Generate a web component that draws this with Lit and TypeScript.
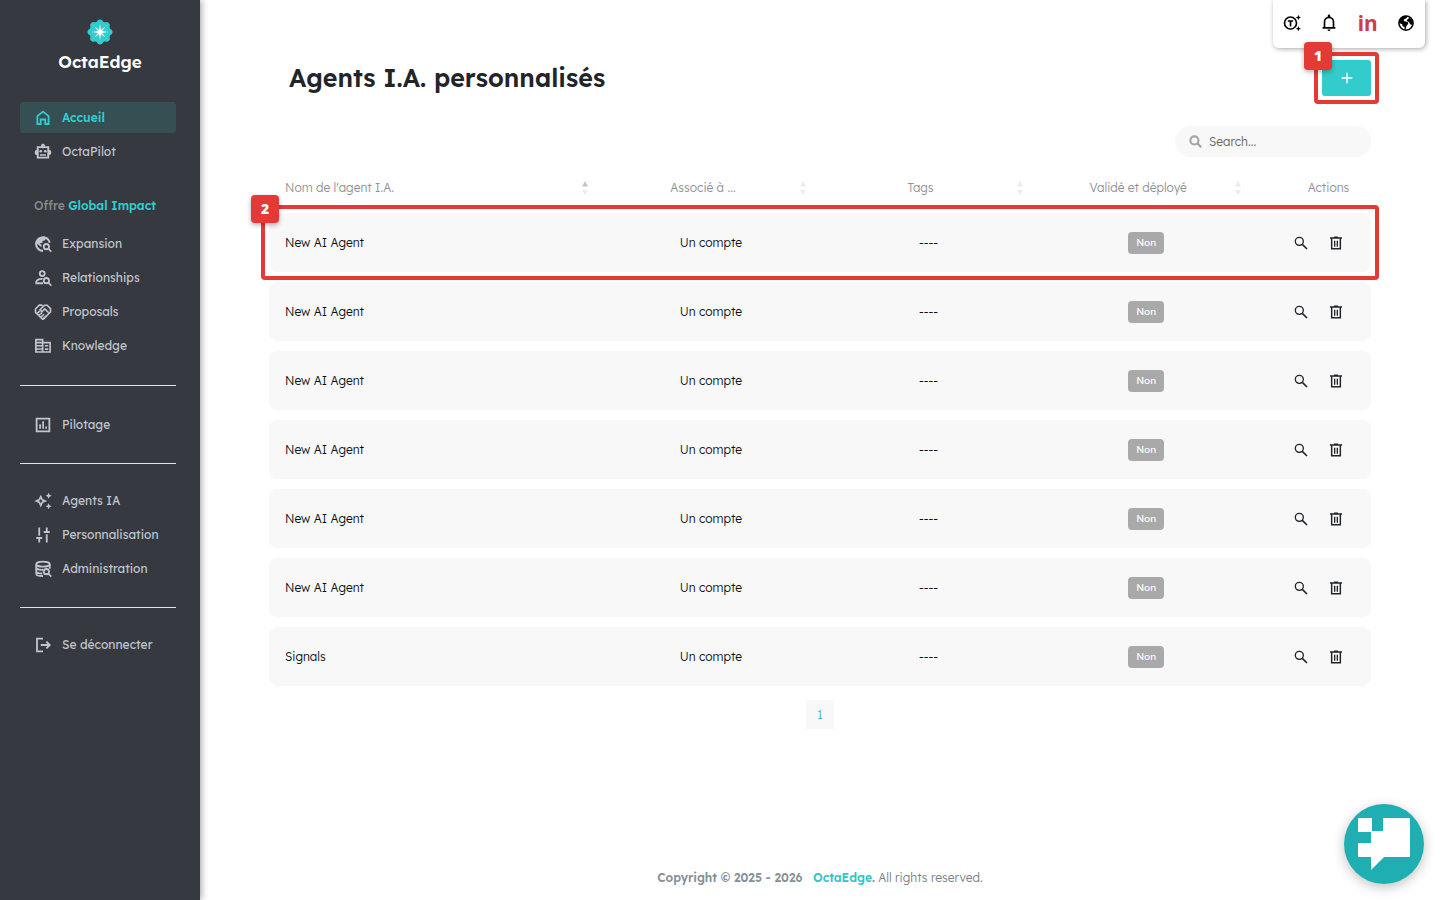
import { LitElement, html, css, svg } from "lit";
import { customElement, property } from "lit/decorators.js";

type Glyph = ReturnType<typeof svg>;

const line = (d: string, w = 2.4): Glyph =>
  svg`<path d=${d} fill="none" stroke="currentColor" stroke-width=${w} />`;
const fill = (d: string): Glyph => svg`<path d=${d} fill="currentColor" fill-rule="evenodd" />`;

const lens = svg`<circle cx="16.5" cy="15.5" r="3.5" fill="none" stroke="currentColor" stroke-width="2.4" />
  <path d="M19 18l4 4.3" stroke="currentColor" stroke-width="2.4" />`;

const ICONS: Record<string, Glyph> = {
  home: line("M4.500 20V9.500L12 3.500l7.500 6v10.500h-4.500v-6h-6v6z"),
  robot: svg`${line("M5 5.500h14v14H5z", 2.6)}${fill("M12 1a2.500 2.500 0 0 1 1.200 4.700V7h-2.400V5.700A2.500 2.500 0 0 1 12 1zM4.500 9v7a3.500 3.500 0 0 1 0-7zM19.500 9a3.500 3.500 0 0 1 0 7zM8 15h8v2H8z")}
    <circle cx="9" cy="11" r="1.800" fill="currentColor" /><circle cx="15" cy="11" r="1.800" fill="currentColor" />`,
  expansion: svg`${fill("M12 22.500C6.300 22.500 1.500 17.700 1.500 12S6.300 1.500 12 1.500c5.200 0 9.400 3.600 10.200 8.700h-2.600a8 8 0 0 0-4.100-5.300V5c0 1.500-1 2.500-2.500 2.500h-1.500v2c0 .55-.45 1-1 1H8.500v2H10v3H9l-4.800-4A8 8 0 0 0 12 19.800z")}${lens}`,
  relations: svg`<circle cx="11" cy="6" r="3.300" fill="none" stroke="currentColor" stroke-width="2.400" />
    ${line("M11.500 13.200C7 12.800 3 14.800 3 17.300V19h9")}${lens}`,
  proposals: svg`${line("M12.500 5L10 2.800H7L2 8v4.500l9.500 9h1L22 12V7.500L17.500 3H14L8 9l2.500 2.500L14.500 8l5 5", 2.2)}${line("M4.500 13.500l3.500-3M7 16l4-3.500M9.500 18.500l4-3.500M12 21l4.500-4", 2)}`,
  knowledge: svg`${line("M2.500 3.500h9v16.500h-9zM11.500 7.500h10v12.500h-10M2.500 7.500h9M2.500 11.700h9M2.500 16h9", 2.2)}${fill("M14.500 10.500h4.500v2.200h-4.500zM14.500 15h4.500v2.200h-4.500z")}`,
  pilotage: svg`${line("M3.500 3.500h17v17h-17z")}${fill("M7 11h2.300v6H7zM11 7h2.300v10H11zM15 14h2.300v3H15z")}`,
  agents: fill("M19.500 9l1.250-2.750L23.500 5l-2.750-1.250L19.500 1l-1.250 2.750L15.500 5l2.750 1.250zM19.500 15l-1.250 2.750L15.500 19l2.750 1.250L19.500 23l1.250-2.750L23.500 19l-2.750-1.250zM11.700 9.300L9 3.500 6.300 9.300.5 12l5.800 2.700L9 20.500l2.700-5.800L17.500 12zM9.990 12.990L9 15.170l-.99-2.180L5.830 12l2.180-.99L9 8.830l.99 2.180 2.180.99z"),
  tune: line("M7 2v11M7 17v5M3 16h8M17 22V11M17 7V2M13 8h8"),
  admin: svg`<ellipse cx="12" cy="5.500" rx="9" ry="3.300" fill="none" stroke="currentColor" stroke-width="2.400" />
    ${line("M3 5.500v13c0 1.700 3.500 2.800 9 2.800M3 10.500c1 2.500 5 2.800 9 2.500M3 16c1 1.500 4 2 8 2M21 5.500v6")}${lens}`,
  logout: line("M12 3.500H4v17h8M9 12h12M16.500 7.500L21 12l-4.500 4.500"),
  token: svg`<circle cx="10" cy="12" r="8" fill="none" stroke="currentColor" stroke-width="2.200" />
    ${line("M6.500 9.300h7M10 9v7.500", 2.2)}${fill("M20.500 8l1-2.500 2.500-1-2.500-1-1-2.500-1 2.500-2.500 1 2.500 1zM20.500 23l1-2.500 2.500-1-2.500-1-1-2.500-1 2.500-2.500 1 2.500 1z")}`,
  bell: svg`${line("M3.500 18.500h17M6 18.500V10.500a6 6 0 0 1 12 0v8", 2.2)}${fill("M10.300 2.500a1.700 1.700 0 0 1 3.400 0V5h-3.400zM10 20.500h4a2 2 0 0 1-4 0z")}`,
  globe: svg`<circle cx="12" cy="12" r="9.500" fill="none" stroke="currentColor" stroke-width="2" />
    ${fill("M2.500 12C2.500 6 7 2 13 2.500c1.500 2-.5 3.500-2.500 4C8.500 7 8.500 9 10 9.500c2 .5 4.500 0 5 2.500.3 2-2 2.500-2.500 4-.5 2 0 4.500-2.500 5.500v-4.500c-1.500 0-3-1-3-2.500v-1zM16.500 4.500l4.500 4v6l-3-.5c-1-1-1-2.500-2.500-3.500-1-.8-2.500-1-2.500-2.200 0-1.500 2.500-1.500 3.500-3.800z")}`,
  search: svg`<circle cx="9.500" cy="9.500" r="6" fill="none" stroke="currentColor" stroke-width="2" />${line("M14 14l7 7", 2.4)}`,
  find: svg`<circle cx="10" cy="10" r="7.500" fill="none" stroke="currentColor" stroke-width="3.800" />${line("M15 15l7.500 7.500", 4.2)}`,
  trash: svg`${line("M5.500 5v15.500h13V5M3 4.500h18M9 3.300h6", 2.2)}${line("M10 8.500v9M14 8.500v9", 2)}`,
  plus: line("M12 4v16M4 12h16", 2.2),
};

@customElement("ui-icon")
export class UiIcon extends LitElement {
  @property() name = "";
  static styles = css`
    :host { display: inline-flex; flex: none; width: 18px; height: 18px; }
    svg { width: 100%; height: 100%; }
  `;
  render() {
    return html`<svg viewBox="0 0 24 24" aria-hidden="true">${ICONS[this.name]}</svg>`;
  }
}

const markers = css`
  .frame { position: absolute; inset: -8px; z-index: 3; border: 4px solid #e53935; border-radius: 4px; pointer-events: none; }
  .step { position: absolute; top: -14px; left: -14px; width: 28px; height: 28px; border-radius: 4px; background: #e53935; color: #fff; font: 800 14px/28px "Open Sans", sans-serif; text-align: center; box-shadow: 0 2px 5px rgba(0, 0, 0, 0.3); }
`;

interface NavLink { icon: string; label: string; active?: boolean; }

@customElement("side-nav")
export class SideNav extends LitElement {
  static styles = css`
    :host { display: block; box-sizing: border-box; padding: 19px 24px 20px 20px; background: #363940; color: #c1c6ce; box-shadow: 1px 0 7px rgba(0, 0, 0, 0.4); }
    .brand { display: flex; flex-direction: column; align-items: center; gap: 5px; color: #fff; padding-left: 4px; font-size: 17px; line-height: 24px; font-weight: 600; text-decoration: none; }
    .brand svg { width: 26px; height: 26px; }
    .group { display: flex; flex-direction: column; gap: 3px; }
    .first { margin-top: 28px; }
    .main { padding-bottom: 1px; }
    .solo { padding-top: 2px; }
    .offer { margin: 29px 0 12px 14px; font-size: 12px; line-height: 20px; font-weight: 500; color: #85878b; }
    .offer b { color: #33cccc; font-weight: 600; }
    .link { display: flex; align-items: center; gap: 10px; height: 31px; padding-left: 14px; border-radius: 3px; color: inherit; font-size: 12px; font-weight: 400; text-decoration: none; }
    .active { background: #364f53; color: #33cccc; font-weight: 600; }
    .rule { height: 1px; border: 0; margin: 23px 0 21px; background: #dfe3ea; }
  `;
  private links(items: NavLink[], extra = "") {
    return html`<div class="group ${extra}">
      ${items.map((i) => html`<a class="link ${i.active ? "active" : ""}" href="#"><ui-icon name=${i.icon}></ui-icon>${i.label}</a>`)}
    </div>`;
  }
  render() {
    const petals = [0, 45, 90, 135, 180, 225, 270, 315];
    return html`
      <a class="brand" href="#">
        <svg viewBox="-13 -13 26 26" aria-hidden="true">
          <circle r="10.700" fill="#33cccc" />
          ${petals.map((a) => svg`<circle cx="9.500" r="3" fill="#33cccc" transform="rotate(${a})" />`)}
          ${petals.map((a) => svg`<path d="M0-1.200L8 0 0 1.200z" fill="#fff" transform="rotate(${a})" />`)}
          <circle r="2.400" fill="#fff" />
        </svg>
        OctaEdge
      </a>
      <nav>
        ${this.links([{ icon: "home", label: "Accueil", active: true }, { icon: "robot", label: "OctaPilot" }], "first")}
        <div class="offer">Offre <b>Global Impact</b></div>
        ${this.links([
          { icon: "expansion", label: "Expansion" },
          { icon: "relations", label: "Relationships" },
          { icon: "proposals", label: "Proposals" },
          { icon: "knowledge", label: "Knowledge" },
        ], "main")}
        <hr class="rule" />
        ${this.links([{ icon: "pilotage", label: "Pilotage" }], "solo")}
        <hr class="rule" />
        ${this.links([
          { icon: "agents", label: "Agents IA" },
          { icon: "tune", label: "Personnalisation" },
          { icon: "admin", label: "Administration" },
        ])}
        <hr class="rule" />
        ${this.links([{ icon: "logout", label: "Se déconnecter" }])}
      </nav>
    `;
  }
}

@customElement("agents-table")
export class AgentsTable extends LitElement {
  static styles = [markers, css`
    :host { display: block; }
    table { width: 100%; border-collapse: separate; border-spacing: 0 10px; table-layout: fixed; font-size: 12px; line-height: 18px; font-weight: 300; color: #0c0f12; }
    .c-name { width: 30.500%; }
    .c-mid { width: 19.750%; }
    th { height: 27px; padding: 0; vertical-align: top; font-weight: 300; color: #8f9194; }
    .head { display: flex; align-items: center; height: 24px; padding: 0 16px; }
    .head span { flex: 1; padding-right: 14px; }
    .start { text-align: left; }
    .last { padding: 0 0 0 28px; justify-content: center; }
    .sort { display: flex; flex: none; width: 8px; height: 16px; padding: 0; border: 0; background: none; color: #ebecee; }
    .sort svg { width: 8px; height: 16px; }
    .asc .up { fill: #c3c4c7; }
    td { height: 59px; padding: 0 22px 0 16px; box-sizing: border-box; background: #f8f8f8; text-align: center; }
    td:first-child { text-align: left; border-radius: 8px 0 0 8px; }
    td:last-child { padding: 0 8px 0 16px; border-radius: 0 8px 8px 0; }
    .badge { display: inline-block; padding: 2px 8px; border-radius: 4px; background: #a9a9a9; color: #fff; font-size: 10px; font-weight: 400; }
    .actions { display: flex; align-items: center; justify-content: center; gap: 19px; }
    .act { display: flex; padding: 0; border: 0; background: none; color: #212529; }
    .act ui-icon { width: 16px; height: 16px; }
    .marked { position: relative; }
  `];
  private head(label: string, asc = false, start = false) {
    return html`<th scope="col"><div class="head ${start ? "start" : ""}"><span>${label}</span>
      <button class="sort ${asc ? "asc" : ""}" aria-label="Trier"><svg viewBox="0 0 8 16" fill="currentColor"><path class="up" d="M4 1l3 5.500H1z" /><path d="M4 15l3-5H1z" /></svg></button></div></th>`;
  }
  render() {
    const names = [...Array(6).fill("New AI Agent"), "Signals"];
    return html`<table>
      <colgroup><col class="c-name" /><col class="c-mid" /><col class="c-mid" /><col class="c-mid" /><col /></colgroup>
      <thead><tr>
        ${this.head("Nom de l'agent I.A.", true, true)}${this.head("Associé à ...")}${this.head("Tags")}${this.head("Validé et déployé")}
        <th scope="col"><div class="head last">Actions</div></th>
      </tr></thead>
      <tbody>
        ${names.map((n, i) => html`<tr class=${i === 0 ? "marked" : ""}>
          <td>${n}</td><td>Un compte</td><td>----</td>
          <td><span class="badge">Non</span></td>
          <td><div class="actions">
            <button class="act" aria-label="Voir"><ui-icon name="search"></ui-icon></button>
            <button class="act" aria-label="Supprimer"><ui-icon name="trash"></ui-icon></button>
          </div>${i === 0 ? html`<div class="frame"><span class="step">2</span></div>` : ""}</td>
        </tr>`)}
      </tbody>
    </table>`;
  }
}

@customElement("app-root")
export class AppRoot extends LitElement {
  static styles = [markers, css`
    :host { display: grid; grid-template-columns: 200px minmax(0, 1fr); min-height: 100vh; background: #fff; font-family: Lexend, Inter, sans-serif; color: #212529; }
    main { display: flex; flex-direction: column; padding: 52px 69px 0; }
    .top { display: flex; align-items: center; justify-content: space-between; height: 52px; padding-left: 20px; }
    h1 { margin: 0; font-size: 25px; line-height: 36px; font-weight: 600; }
    .add-wrap { position: relative; display: flex; }
    .add { display: flex; align-items: center; justify-content: center; width: 49px; height: 36px; padding: 0; border: 0; border-radius: 3px; background: #33cccc; color: #fff; }
    .add ui-icon { width: 16px; height: 16px; }
    .search { display: flex; align-items: center; align-self: flex-end; gap: 7px; box-sizing: border-box; width: 196px; height: 31px; margin: 22px 0 9px; padding: 0 14px; border-radius: 16px; background: #f8f8f8; color: #a5a5a5; }
    .search ui-icon { width: 13px; height: 13px; }
    .search input { flex: 1; min-width: 0; padding: 0; border: 0; outline: 0; background: none; font: 300 12px/18px Lexend, Inter, sans-serif; color: #212529; }
    .search input::placeholder { color: #666; opacity: 1; }
    .page { align-self: center; width: 28px; height: 29px; margin-top: 4px; border: 0; padding: 0; background: #f8f8f8; color: #33bfc0; font: 300 12px/18px Lexend, Inter, sans-serif; }
    footer { margin-top: auto; padding-bottom: 12px; text-align: center; font-size: 12px; line-height: 20px; font-weight: 300; color: #788189; }
    footer b { font-weight: 600; color: #869099; }
    footer a { margin-left: 7px; color: #33c4c6; text-decoration: none; }
    .tools { position: absolute; z-index: 2; top: 0; right: 15px; display: flex; align-items: center; justify-content: space-between; box-sizing: border-box; width: 152px; height: 48px; padding: 0 10px 2px; border-radius: 0 0 6px 6px; background: #fff; box-shadow: 1px 1px 5px rgba(0, 0, 0, 0.35); }
    .tool { display: flex; padding: 0; border: 0; background: none; color: #000; }
    .lang { font: 700 21px/24px "Noto Sans", sans-serif; color: #d63a49; text-decoration: none; }
    .chat { position: fixed; right: 16px; bottom: 16px; width: 80px; height: 80px; padding: 0; border: 0; border-radius: 50%; background: #1fafb2; box-shadow: 0 3px 12px rgba(0, 0, 0, 0.25); }
    .chat svg { display: block; width: 80px; height: 80px; }
  `];
  render() {
    return html`
      <side-nav></side-nav>
      <main>
        <div class="top">
          <h1>Agents I.A. personnalisés</h1>
          <div class="add-wrap">
            <button class="add" aria-label="Ajouter"><ui-icon name="plus"></ui-icon></button>
            <div class="frame"><span class="step">1</span></div>
          </div>
        </div>
        <label class="search"><ui-icon name="find"></ui-icon><input type="search" placeholder="Search..." aria-label="Search" /></label>
        <agents-table></agents-table>
        <button class="page">1</button>
        <footer><b>Copyright © 2025 - 2026 <a href="#">OctaEdge</a>.</b> All rights reserved.</footer>
      </main>
      <div class="tools">
        <button class="tool" aria-label="Traduction"><ui-icon name="token"></ui-icon></button>
        <button class="tool" aria-label="Notifications"><ui-icon name="bell"></ui-icon></button>
        <a class="lang" href="#">in</a>
        <button class="tool" aria-label="Langue"><ui-icon name="globe"></ui-icon></button>
      </div>
      <button class="chat" aria-label="Chat">
        <svg viewBox="0 0 80 80"><path d="M14 14h14v13h11V14h27v39H40L27 66V53H14V39h13V28H14z" fill="#fff" /></svg>
      </button>
    `;
  }
}
